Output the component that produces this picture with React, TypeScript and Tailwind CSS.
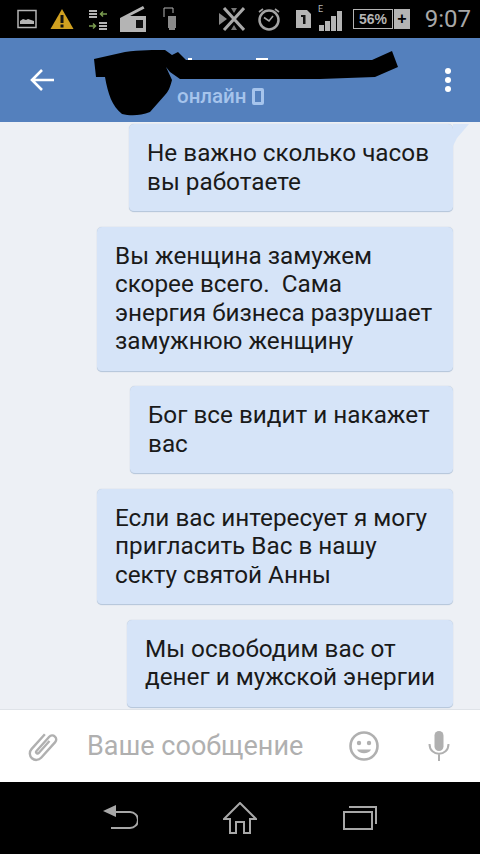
const MESSAGES = [
  { width: 'w-[324px]', lines: ['Не важно сколько часов', 'вы работаете'] },
  {
    width: 'w-[356px]',
    lines: ['Вы женщина замужем', 'скорее всего.  Сама', 'энергия бизнеса разрушает', 'замужнюю женщину'],
  },
  { width: 'w-[323px]', lines: ['Бог все видит и накажет', 'вас'] },
  {
    width: 'w-[356px]',
    lines: ['Если вас интересует я могу', 'пригласить Вас в нашу', 'секту святой Анны'],
  },
  { width: 'w-[326px]', lines: ['Мы освободим вас от', 'денег и мужской энергии'] },
];

function StatusBar() {
  return (
    <div className="flex h-[38px] shrink-0 items-center bg-black pl-[17px] pr-[9px] text-[#b4b4b4]">
      <svg width="20" height="20" viewBox="0 0 20 20" fill="none">
        <rect x="1" y="1.5" width="18" height="17" stroke="#b4b4b4" strokeWidth="1.5" />
        <path d="M3 15v-3l3-2 3 1 2-1 3 1 3 1v3z" fill="#b4b4b4" />
      </svg>
      <svg className="ml-[13px]" width="24" height="22" viewBox="0 0 24 22">
        <path d="M12 1 23.5 21H.5z" fill="#d0a020" />
        <rect x="10.5" y="7" width="3" height="8" fill="#111" />
        <rect x="10.5" y="16.5" width="3" height="3" fill="#111" />
      </svg>
      <svg className="ml-[14px]" width="20" height="22" viewBox="0 0 20 22" fill="none">
        <path d="M1 3h8M1 6h8M1 9h8M11 21h8M11 18h8M11 15h8" stroke="#b4b4b4" strokeWidth="1.8" />
        <path d="M19 6h-6M15 3.5 12.5 6l2.5 2.5" stroke="#7a9c50" strokeWidth="1.5" />
        <path d="M1 18h6M5 15.5 7.5 18 5 20.5" stroke="#7a9c50" strokeWidth="1.5" />
      </svg>
      <svg className="ml-[12px]" width="26" height="26" viewBox="0 0 26 26">
        <path d="M0 12 23 0l1.5 2.5L10 10h16v16H0z" fill="#b4b4b4" />
        <rect x="16" y="14" width="7" height="8" fill="#111" />
      </svg>
      <svg className="ml-[17px]" width="14" height="24" viewBox="0 0 14 24" fill="none">
        <path d="M1 10V1h9v5" stroke="#b4b4b4" strokeWidth="1" />
        <path d="M5 9h8v12H5z" fill="#8a8a8a" />
        <path d="M6 21h6v2H6z" fill="#8a8a8a" />
      </svg>
      <svg className="ml-[42px]" width="26" height="26" viewBox="0 0 26 26" fill="none">
        <path d="M5 2 25 24M25 2 5 24" stroke="#a8a8a8" strokeWidth="3" />
        <path d="M0 7 8 13 0 19z" fill="#8a8a8a" />
        <path d="M12 2h6l-3 5zM12 24h6l-3-5z" fill="#777" />
      </svg>
      <svg className="ml-[12px]" width="24" height="26" viewBox="0 0 24 26" fill="none">
        <circle cx="12" cy="14" r="9.5" stroke="#a3a3a3" strokeWidth="2.5" />
        <path d="M7 11.5 12 15l4-5M2 6l4-3M22 6l-4-3" stroke="#a3a3a3" strokeWidth="1.6" />
      </svg>
      <svg className="ml-[15px]" width="15" height="18" viewBox="0 0 15 18">
        <path d="M0 0h11l4 4v14H0z" fill="#b4b4b4" />
        <path d="M5 5h4.5v9H7V7H5z" fill="#111" />
      </svg>
      <div className="relative ml-[8px] flex h-[24px] w-[24px] items-end gap-[1px]">
        <span className="absolute left-[-1px] top-[-3px] font-['Roboto',sans-serif] text-[9px] leading-[10px]">E</span>
        <div className="h-[6px] w-[5px] bg-[#b4b4b4]" />
        <div className="h-[10px] w-[5px] bg-[#b4b4b4]" />
        <div className="h-[15px] w-[5px] bg-[#b4b4b4]" />
        <div className="h-[20px] w-[5px] bg-[#b4b4b4]" />
      </div>
      <div className="ml-[10px] flex h-[20px] w-[40px] items-center justify-center border border-[#b4b4b4] font-['Liberation_Sans',sans-serif] text-[14px] font-bold">
        56%
      </div>
      <div className="ml-[1px] flex h-[20px] w-[16px] items-center justify-center bg-[#b4b4b4] font-['Liberation_Sans',sans-serif] text-[16px] font-bold leading-none text-black">
        +
      </div>
      <span className="ml-auto font-['Roboto',sans-serif] text-[24px] leading-none text-[#a8a8a8]">9:07</span>
    </div>
  );
}

function Header() {
  return (
    <div className="relative flex h-[84px] shrink-0 items-center bg-[#5480bd] pl-[30px] pr-[29px]">
      <svg width="25" height="24" viewBox="0 0 25 24" fill="none">
        <path d="M24 12H3M12 2 2 12l10 10" stroke="#fff" strokeWidth="2.6" />
      </svg>
      <div className="ml-[122px] mt-[33px] flex items-center gap-[5px] font-['Roboto',sans-serif] text-[20.5px] font-medium leading-none text-[#a6c4ec]">
        онлайн
        <div className="h-[17px] w-[12px] rounded-[2px] border-[3px] border-[#a6c4ec]" />
      </div>
      <div className="ml-auto flex flex-col gap-[3px]">
        <div className="size-[6px] rounded-full bg-white" />
        <div className="size-[6px] rounded-full bg-white" />
        <div className="size-[6px] rounded-full bg-white" />
      </div>
      {/* scribbled-out name, viewBox is in page coordinates */}
      <svg className="absolute left-[90px] top-[8px]" width="310" height="72" viewBox="90 46 310 72">
        <rect x="188" y="58" width="4" height="3" fill="#fff" />
        <rect x="256" y="58" width="12" height="3" fill="#fff" />
        <path
          d="M94 59 125 52 C140 50 155 50 165 50L172 55 178 52 186 60H240L372 60 392 51 398 67 375 77 320 79H180L170 72 166 67 172 80 C170 88 168 92 165 95 L150 112 C140 116 130 116 122 114 C112 106 108 94 105 77L96 77Z"
          fill="#000"
        />
      </svg>
    </div>
  );
}

function Bubble({ width, lines, tail }: { width: string; lines: string[]; tail?: boolean }) {
  return (
    <div className={`relative self-end rounded-[5px] border-b border-[#b8c8dc] bg-[#d6e4f8] py-[15px] pl-[18px] shadow-[0_0_1px_#a8b8cc] ${width}`}>
      {tail && (
        <svg className="absolute right-[-16px] top-0" width="16" height="22" viewBox="0 0 16 22">
          <path d="M0 0H16L4 14 0 22Z" fill="#d6e4f8" />
        </svg>
      )}
      {lines.map((line) => (
        <div key={line} className="whitespace-pre">
          {line}
        </div>
      ))}
    </div>
  );
}

function InputBar() {
  return (
    <div className="flex h-[73px] shrink-0 items-center border-t border-[#dfe3e8] bg-white pl-[28px] pr-[30px]">
      <svg width="30" height="32" viewBox="0 0 30 32" fill="none" stroke="#b0b0b0" strokeWidth="2.4">
        <g transform="rotate(42 15 16)">
          <path d="M8.5 6v20a6.5 6.5 0 0 0 13 0V5a4 4 0 0 0-8 0v19a1.5 1.5 0 0 0 3 0V8" />
        </g>
      </svg>
      <span className="ml-[29px] font-['Roboto',sans-serif] text-[27px] leading-none text-[#b0b0b0]">Ваше сообщение</span>
      <svg className="ml-auto" width="32" height="32" viewBox="0 0 32 32" fill="none">
        <circle cx="16" cy="16" r="13.5" stroke="#b0b0b0" strokeWidth="2.6" />
        <circle cx="11" cy="13" r="2.2" fill="#b0b0b0" />
        <circle cx="21" cy="13" r="2.2" fill="#b0b0b0" />
        <path d="M9 19.5c2 5 12 5 14 0z" fill="#b0b0b0" />
      </svg>
      <svg className="ml-[48px]" width="22" height="30" viewBox="0 0 22 30" fill="none">
        <rect x="6.5" y="0" width="9" height="20" rx="4.5" fill="#b0b0b0" />
        <path d="M1.5 13c0 13 19 13 19 0M11 23v7" stroke="#b0b0b0" strokeWidth="2" />
      </svg>
    </div>
  );
}

function NavBar() {
  return (
    <div className="flex h-[72px] shrink-0 items-center bg-black pl-[103px]">
      <svg width="35" height="26" viewBox="0 0 35 26" fill="none">
        <path d="M8 7h19a7.5 7.5 0 0 1 0 16H8" stroke="#a8a8a8" strokeWidth="2" />
        <path d="M0 6 13 0v12z" fill="#a8a8a8" />
      </svg>
      <svg className="ml-[85px]" width="34" height="32" viewBox="0 0 34 32" fill="none" stroke="#a8a8a8" strokeWidth="2">
        <path d="M1 17 17 1l16 16h-6v14h-6V20h-8v11H7V17z" />
      </svg>
      <svg className="ml-[86px]" width="34" height="24" viewBox="0 0 34 24" fill="none" stroke="#a8a8a8" strokeWidth="2">
        <rect x="1" y="6" width="28" height="17" />
        <path d="M6 1h27v17" />
      </svg>
    </div>
  );
}

export default function App() {
  return (
    <div className="flex h-[854px] w-[480px] flex-col overflow-hidden bg-[#edf0f5] font-['Roboto',sans-serif] text-[24.3px] leading-[28.5px] text-[#1a1a1a]">
      <StatusBar />
      <Header />
      <div className="flex min-h-0 flex-1 flex-col gap-[14.5px] pr-[27px] pt-[2px]">
        {MESSAGES.map((message, index) => (
          <Bubble key={index} {...message} tail={index === 0} />
        ))}
      </div>
      <InputBar />
      <NavBar />
    </div>
  );
}
